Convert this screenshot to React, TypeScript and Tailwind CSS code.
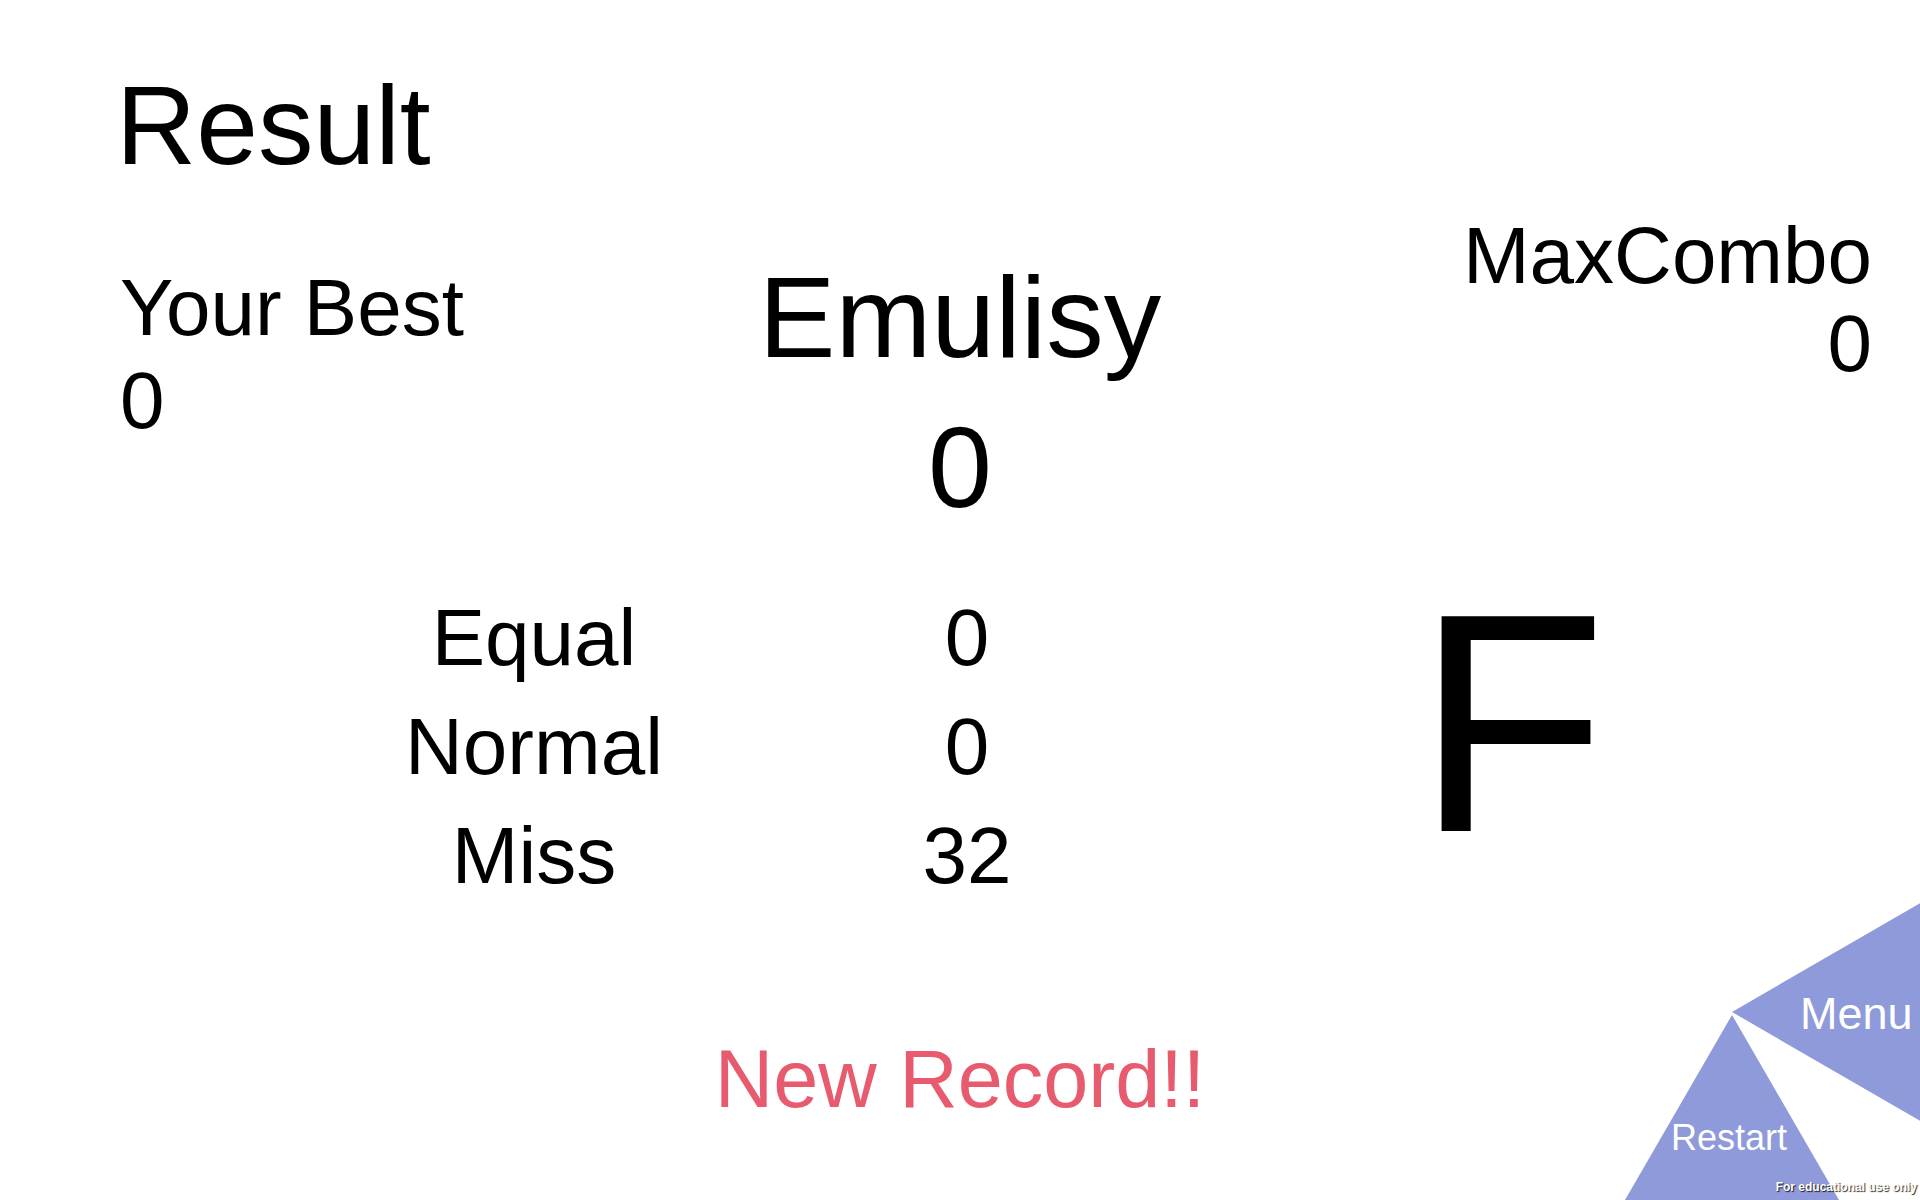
const judgements = [
  { label: "Equal", count: 0 },
  { label: "Normal", count: 0 },
  { label: "Miss", count: 32 },
];

const CornerButtons = () => {
  return (
    <div className="absolute bottom-0 right-0 h-[320px] w-[340px]">
      <svg width="340" height="320" viewBox="0 0 340 320" className="absolute inset-0">
        <polygon points="152,132 380,0 380,264" fill="#8e9ad9" />
        <polygon points="152,135 45,320 259,320" fill="#8e9ad9" />
      </svg>
      <button className="absolute left-[220px] top-[111px] text-[45px] leading-none text-white">
        Menu
      </button>
      <button className="absolute left-[91px] top-[240px] text-[36px] leading-none text-white">
        Restart
      </button>
      <span className="absolute bottom-[7px] right-[3px] text-[12px] font-bold leading-none text-white [text-shadow:1px_1px_1px_rgba(0,0,0,0.85)]">
        For educational use only
      </span>
    </div>
  );
};

export default function App() {
  return (
    <div className="relative h-[1200px] w-[1920px] overflow-hidden bg-white font-['Liberation_Sans',Arial,sans-serif] text-black">
      <h1 className="pl-[116px] pt-[71px] text-[111px] leading-none">Result</h1>

      <div className="grid grid-cols-3 items-start">
        <div className="mt-[79px] pl-[120px] text-[80px] leading-[93px]">
          <p>Your Best</p>
          <p>0</p>
        </div>
        <div className="mt-[78px] flex flex-col items-center text-[115px] leading-none">
          <p>Emulisy</p>
          <p className="mt-[35px]">0</p>
        </div>
        <div className="mt-[30px] pr-[48px] text-right text-[80px] leading-[88px]">
          <p>MaxCombo</p>
          <p>0</p>
        </div>
      </div>

      <div className="flex items-start pl-[384px]">
        <div className="mt-[58px] grid grid-cols-[300px_200px] gap-x-[183px] text-center text-[80px] leading-[109px]">
          {judgements.map((j) => (
            <div key={j.label} className="contents">
              <span>{j.label}</span>
              <span>{j.count}</span>
            </div>
          ))}
        </div>
        <div className="ml-[349px] mt-[42px] text-[312px] leading-none">F</div>
      </div>

      <p className="mt-[129px] text-center text-[81px] leading-none text-[#e85a6e]">
        New Record!!
      </p>

      <CornerButtons />
    </div>
  );
}
